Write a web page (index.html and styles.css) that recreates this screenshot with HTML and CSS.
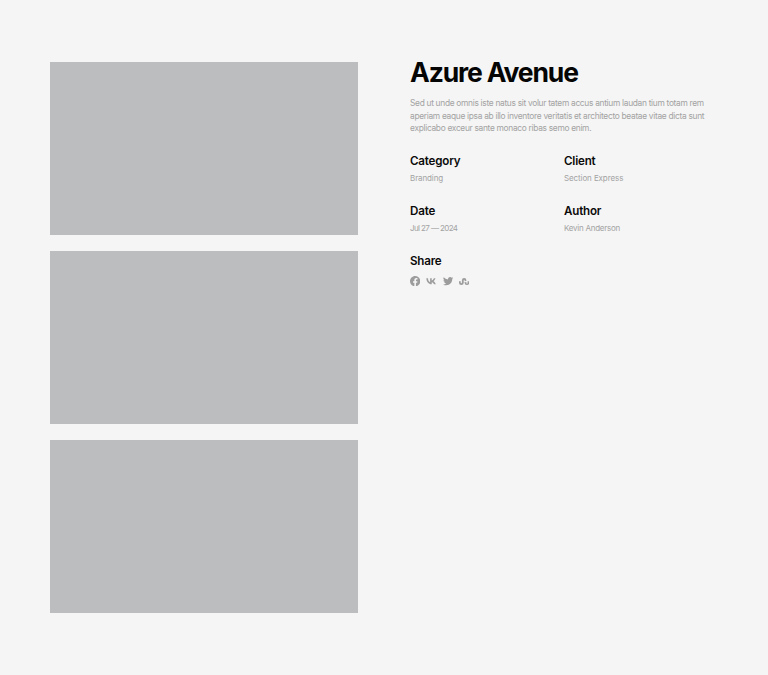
FILE: index.html
```html
<!DOCTYPE html>
<html lang="en">
<head>
<meta charset="utf-8">
<title>Azure Avenue</title>
<link rel="stylesheet" href="styles.css">
</head>
<body>
<main class="project">
  <div class="gallery">
    <div class="shot"></div>
    <div class="shot"></div>
    <div class="shot"></div>
  </div>
  <section class="info">
    <h1 class="title">Azure Avenue</h1>
    <p class="lead">Sed ut unde omnis iste natus sit volur tatem accus antium laudan tium totam rem aperiam eaque ipsa ab illo inventore veritatis et architecto beatae vitae dicta sunt explicabo exceur sante monaco ribas semo enim.</p>
    <div class="meta">
      <div class="item"><h2 class="label">Category</h2><p class="value">Branding</p></div>
      <div class="item"><h2 class="label">Client</h2><p class="value">Section Express</p></div>
      <div class="item"><h2 class="label">Date</h2><p class="value value-date">Jul 27 — 2024</p></div>
      <div class="item"><h2 class="label">Author</h2><p class="value value-name">Kevin Anderson</p></div>
    </div>
    <div class="share">
      <h2 class="label">Share</h2>
      <div class="icons">
        <svg class="icon" viewBox="0 0 24 24"><path d="M24 12.07C24 5.4 18.63 0 12 0S0 5.4 0 12.07c0 6.03 4.39 11.02 10.13 11.93v-8.44H7.08v-3.49h3.05V9.41c0-3.02 1.79-4.69 4.53-4.69 1.31 0 2.69.24 2.69.24v2.97h-1.52c-1.49 0-1.95.93-1.95 1.89v2.25h3.33l-.53 3.49h-2.8V24C19.61 23.09 24 18.1 24 12.07z"/></svg>
        <svg class="icon" viewBox="0 0 24 24"><path d="M13.1 19.5C6 19.5 1.200 14 .8 5.500h3.900c.2 6 2.800 8.500 4.900 9V5.500h3.700v5.200c2.100-.2 4.300-2.600 5-5.200h3.700c-.6 3.200-2.900 5.600-4.600 6.600 1.700.8 4.400 2.900 5.500 7.400h-4c-.9-2.800-3-4.900-5.600-5.200v5.200z"/></svg>
        <svg class="icon" viewBox="0 0 24 24"><path d="M24 4.560a9.800 9.800 0 0 1-2.830.78 4.930 4.930 0 0 0 2.170-2.720 9.860 9.860 0 0 1-3.130 1.190 4.920 4.920 0 0 0-8.390 4.490A13.970 13.970 0 0 1 1.670 3.150a4.920 4.920 0 0 0 1.520 6.570 4.900 4.900 0 0 1-2.230-.62v.06a4.920 4.920 0 0 0 3.950 4.830 4.930 4.930 0 0 1-2.220.08 4.930 4.930 0 0 0 4.600 3.420A9.880 9.880 0 0 1 0 19.540a13.940 13.940 0 0 0 7.550 2.210c9.060 0 14.010-7.500 14.010-14.010 0-.21 0-.42-.02-.63A10 10 0 0 0 24 4.560z"/></svg>
        <svg class="icon" viewBox="0 0 24 24"><path d="M12 9a1 1 0 0 0-1 1v5.500a5.500 5.500 0 0 1-11 0V12h4v3.400a1.400 1.400 0 0 0 2.800 0V10a5.200 5.200 0 0 1 10.400 0v1.300l-2.300.7-1.900-.7V10a1 1 0 0 0-1-1zm1 4.600l1.900.8 2.300-.7v2.800a1.400 1.400 0 0 0 2.800 0V12h4v3.500a5.500 5.500 0 0 1-11 0z"/></svg>
      </div>
    </div>
  </section>
</main>
</body>
</html>
```
FILE: styles.css
```css
* { box-sizing: border-box; }
html, body { margin: 0; padding: 0; }
body {
  background: #f5f5f5;
  font-family: Inter, "Noto Sans", sans-serif;
  min-height: 675px;
}
.project {
  display: grid;
  grid-template-columns: 308px 308px;
  column-gap: 52px;
  padding: 62px 0 0 50px;
}
.gallery { display: flex; flex-direction: column; gap: 16px; }
.shot { height: 173px; background: #bcbdbe; }
.info { min-width: 0; }
.title {
  margin: 0;
  font-size: 26.5px;
  line-height: 21px;
  font-weight: 700;
  letter-spacing: -1.15px;
  color: #050505;
}
.lead {
  margin: 14px 0 0;
  width: 300px;
  font-size: 8.4px;
  line-height: 12.5px;
  letter-spacing: -0.31px;
  color: #a3a3a3;
}
.meta {
  display: grid;
  grid-template-columns: 154px 154px;
  row-gap: 18.5px;
  margin-top: 18px;
}
.label {
  margin: 0;
  font-size: 11.6px;
  line-height: 16px;
  font-weight: 600;
  letter-spacing: -0.2px;
  color: #0a0a0a;
}
.value {
  margin: 2px 0 0;
  font-size: 8px;
  line-height: 14px;
  letter-spacing: -0.1px;
  color: #a3a3a3;
}
.value-date { letter-spacing: -0.6px; }
.value-name { letter-spacing: -0.25px; }
.share { margin-top: 18px; }
.icons { display: flex; gap: 6px; margin-top: 7px; align-items: center; }
.icon { width: 10.3px; height: 10.3px; fill: #9c9c9c; display: block; }
```
